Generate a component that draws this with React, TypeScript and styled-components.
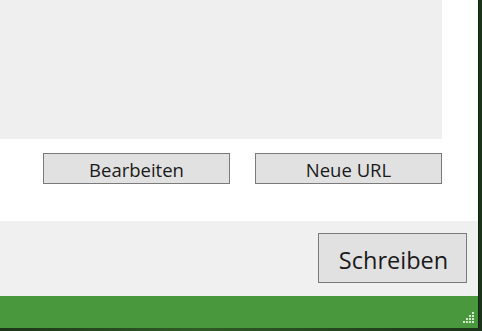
import styled, { createGlobalStyle } from "styled-components";

const GlobalStyle = createGlobalStyle`
    html, body {
        margin: 0;
        padding: 0;
        background: #1f3a1c;
    }
    body {
        font-family: "Open Sans", "Noto Sans", sans-serif;
    }
`;

const Desktop = styled.div`
    width: 482px;
    height: 331px;
    display: flex;
    flex-direction: column;
    background: linear-gradient(90deg, #1d3519, #2f5a26 40%, #1b3318);
    overflow: hidden;
`;

const Window = styled.div`
    width: 479px;
    height: 328px;
    display: flex;
    flex-direction: column;
    background: #ffffff;
    border-right: 1px solid #0f2410;
    box-sizing: border-box;
`;

const TopArea = styled.div`
    height: 139px;
    display: flex;
`;

const ListPanel = styled.div`
    width: 442px;
    height: 100%;
    background: #efefef;
`;

const ButtonRow = styled.div`
    height: 82px;
    display: flex;
    gap: 25px;
    padding: 14px 0 0 43px;
    box-sizing: border-box;
`;

const Footer = styled.div`
    height: 75px;
    background: #f0f0f0;
    display: flex;
    justify-content: flex-end;
    align-items: flex-start;
    padding: 12px 11px 0 0;
    box-sizing: border-box;
`;

const WinButton = styled.button<{ $big?: boolean }>`
    width: ${p => (p.$big ? "149px" : "187px")};
    height: ${p => (p.$big ? "50px" : "31px")};
    background: #e1e1e1;
    border: 1px solid #7a7a7a;
    border-radius: 0;
    padding: ${p => (p.$big ? "4px 0 0 2px" : "2px 0 0")};
    font-family: "Open Sans", "Noto Sans", sans-serif;
    font-size: ${p => (p.$big ? "23.5px" : "18.5px")};
    color: #1a1a1a;
    cursor: pointer;
`;

const StatusBar = styled.div`
    height: 32px;
    background: #4a983e;
    display: flex;
    justify-content: flex-end;
    align-items: flex-end;
    padding: 0 3px 4px 0;
    box-sizing: border-box;
`;

const Grip = () => (
    <svg width="13" height="13" viewBox="0 0 13 13">
        {[
            [10, 1], [10, 4], [7, 4], [10, 7], [7, 7], [4, 7],
            [10, 10], [7, 10], [4, 10], [1, 10],
        ].map(([x, y]) => (
            <rect key={`${x}-${y}`} x={x} y={y} width="2" height="2" fill="#d6ead2" />
        ))}
    </svg>
);

export default function App() {
    return (
        <>
            <GlobalStyle />
            <Desktop>
                <Window>
                    <TopArea>
                        <ListPanel />
                    </TopArea>
                    <ButtonRow>
                        <WinButton>Bearbeiten</WinButton>
                        <WinButton>Neue URL</WinButton>
                    </ButtonRow>
                    <Footer>
                        <WinButton $big>Schreiben</WinButton>
                    </Footer>
                    <StatusBar>
                        <Grip />
                    </StatusBar>
                </Window>
            </Desktop>
        </>
    );
}
